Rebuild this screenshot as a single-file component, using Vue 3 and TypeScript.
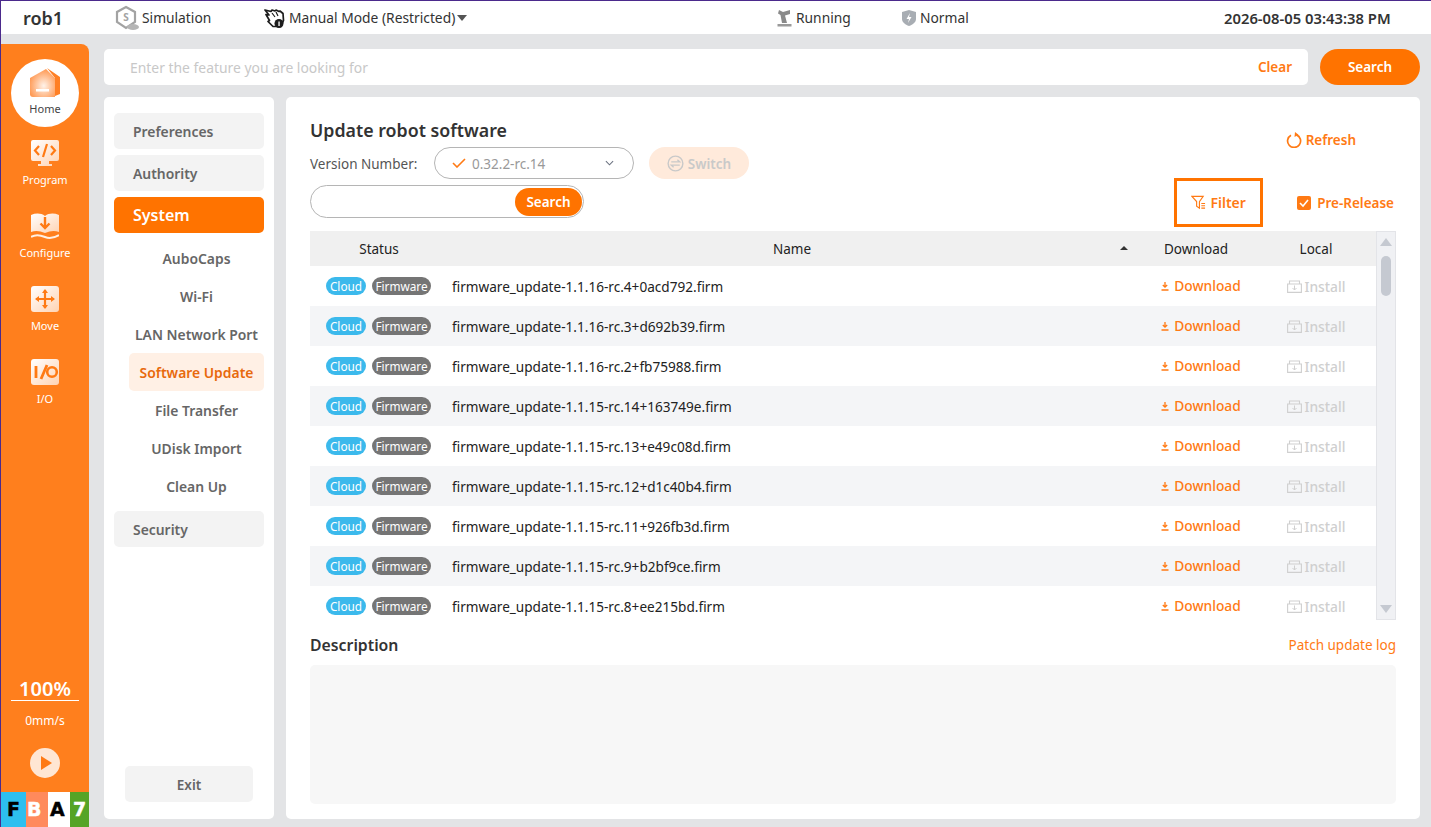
<script setup lang="ts">
interface NavItem {
  label: string
  kind: 'group' | 'active' | 'sub' | 'current'
}

const navItems: NavItem[] = [
  { label: 'Preferences', kind: 'group' },
  { label: 'Authority', kind: 'group' },
  { label: 'System', kind: 'active' },
  { label: 'AuboCaps', kind: 'sub' },
  { label: 'Wi-Fi', kind: 'sub' },
  { label: 'LAN Network Port', kind: 'sub' },
  { label: 'Software Update', kind: 'current' },
  { label: 'File Transfer', kind: 'sub' },
  { label: 'UDisk Import', kind: 'sub' },
  { label: 'Clean Up', kind: 'sub' },
  { label: 'Security', kind: 'group' }
]

const files = [
  'firmware_update-1.1.16-rc.4+0acd792.firm',
  'firmware_update-1.1.16-rc.3+d692b39.firm',
  'firmware_update-1.1.16-rc.2+fb75988.firm',
  'firmware_update-1.1.15-rc.14+163749e.firm',
  'firmware_update-1.1.15-rc.13+e49c08d.firm',
  'firmware_update-1.1.15-rc.12+d1c40b4.firm',
  'firmware_update-1.1.15-rc.11+926fb3d.firm',
  'firmware_update-1.1.15-rc.9+b2bf9ce.firm',
  'firmware_update-1.1.15-rc.8+ee215bd.firm'
]
</script>

<template>
  <div class="page">
    <header class="topbar">
      <div class="robot">rob1</div>
      <div class="top-item sim">
        <svg class="sim-icon" viewBox="0 0 26 26" width="26" height="26">
          <path d="M12 2l9 5v10l-9 6-9-6V7z" fill="none" stroke="#a3a3a3" stroke-width="2.2" />
          <text x="12" y="16" font-size="10" font-weight="700" text-anchor="middle" fill="#a3a3a3" font-family="Noto Sans">S</text>
          <ellipse cx="19" cy="22" rx="6" ry="3" fill="#b5b5b5" />
        </svg>
        <span>Simulation</span>
      </div>
      <div class="top-item mode">
        <svg viewBox="0 0 22 22" width="22" height="22">
          <path d="M1 3l6 1.500 1-1.500 3 1 1-1 3 1.500 1-.500 3 2.500.500 7-2.500 6H9l-5-5 1.500-1L2 7.500l3 .500z" fill="#fff" stroke="#1c1c1c" stroke-width="1.700" stroke-linejoin="round" />
          <path d="M8 6l3 4M12 5l2 4" stroke="#1c1c1c" stroke-width="1.200" />
          <circle cx="15" cy="16.500" r="4.500" fill="#1c1c1c" />
          <rect x="14.400" y="14.500" width="1.300" height="4.500" fill="#fff" />
        </svg>
        <span>Manual Mode (Restricted)</span>
        <i class="caret"></i>
      </div>
      <div class="top-item running">
        <svg viewBox="0 0 18 18" width="18" height="18">
          <path d="M3 1l4 2 7-2v4L9 6.500 11 14H6L4.500 6 2 4.500z" fill="#8a8a8a" />
          <rect x="1.500" y="15" width="14" height="2.500" fill="#9a9a9a" />
        </svg>
        <span>Running</span>
      </div>
      <div class="top-item normal">
        <svg viewBox="0 0 16 18" width="16" height="18">
          <path d="M8 1l7 2v7c0 3-3 5.500-7 7-4-1.500-7-4-7-7V3z" fill="#a8adb3" />
          <path d="M9 4L5.500 10H8l-1 4 3.500-6H8z" fill="#fff" />
        </svg>
        <span>Normal</span>
      </div>
      <div class="clock">2026-08-05 03:43:38 PM</div>
    </header>

    <div class="shell">
      <aside class="rail">
        <div class="rail-home">
          <svg viewBox="0 0 30 30" width="30" height="30">
            <defs>
              <radialGradient id="homeGrad" cx="0.55" cy="0.6" r="0.7">
                <stop offset="0" stop-color="#fff3ea" />
                <stop offset="1" stop-color="#ff8a3a" />
              </radialGradient>
              <linearGradient id="railGrad" x1="0" y1="0" x2="1" y2="1">
                <stop offset="0" stop-color="#ffffff" />
                <stop offset="1" stop-color="#ffd3b3" />
              </linearGradient>
            </defs>
            <path d="M17 0l13 9v17l-5 2V10z" fill="#ff7f24" />
            <path d="M0 10L16 1l9 9v19H3c-2 0-3-1-3-3z" fill="url(#homeGrad)" />
            <rect x="6" y="21" width="13" height="2.500" fill="#fff" />
          </svg>
          <span>Home</span>
        </div>
        <div class="rail-item">
          <svg viewBox="0 0 28 26" width="28" height="26">
            <path d="M2 0h24a2 2 0 0 1 2 2v17a2 2 0 0 1-2 2h-8v3h3v2H7v-2h3v-3H2a2 2 0 0 1-2-2V2a2 2 0 0 1 2-2z" fill="url(#railGrad)" />
            <path d="M8 6l-4 4.500L8 15M20 6l4 4.500-4 4.500M16 4l-4 13" fill="none" stroke="#ff7a14" stroke-width="2.200" />
          </svg>
          <span>Program</span>
        </div>
        <div class="rail-item">
          <svg viewBox="0 0 28 26" width="28" height="26">
            <path d="M0 2c5-2 10-2 14 1 4-3 9-3 14-1v17c-5-2-9-1-14 1-5-2-9-3-14-1z" fill="url(#railGrad)" />
            <path d="M14 4v11M9.500 10.500l4.500 4.500 4.500-4.500" fill="none" stroke="#ff7a14" stroke-width="2.400" />
            <path d="M0 24c5-3 9-2 14 0s9 1 14-2" fill="none" stroke="#fff0e4" stroke-width="2" />
          </svg>
          <span>Configure</span>
        </div>
        <div class="rail-item">
          <svg viewBox="0 0 28 26" width="28" height="26">
            <rect width="28" height="26" rx="3" fill="url(#railGrad)" />
            <path d="M14 4v18M5 13h18" stroke="#ff7a14" stroke-width="2.200" />
            <path d="M14 3l3 4h-6zM14 23l3-4h-6zM4 13l4-3v6zM24 13l-4-3v6z" fill="#ff7a14" />
          </svg>
          <span>Move</span>
        </div>
        <div class="rail-item">
          <svg viewBox="0 0 28 26" width="28" height="26">
            <rect width="28" height="26" rx="3" fill="url(#railGrad)" />
            <path d="M5 7v12M10 20l6-14" stroke="#ff7a14" stroke-width="2.800" />
            <circle cx="21" cy="13" r="4.800" fill="none" stroke="#ff7a14" stroke-width="2.600" />
          </svg>
          <span>I/O</span>
        </div>
        <div class="rail-speed">
          <div class="speed-pct">100%</div>
          <div class="speed-val">0mm/s</div>
          <svg class="play" viewBox="0 0 30 30" width="30" height="30">
            <circle cx="15" cy="15" r="15" fill="#ffe6d3" />
            <path d="M11 8l11 7-11 7z" fill="#ff7a14" />
          </svg>
        </div>
        <div class="fba">
          <span class="fba-f">F</span><span class="fba-b">B</span><span class="fba-a">A</span><span class="fba-7">7</span>
        </div>
      </aside>

      <div class="content">
        <div class="search-row">
          <div class="search-box">
            <span class="placeholder">Enter the feature you are looking for</span>
            <span class="clear">Clear</span>
          </div>
          <button class="search-btn">Search</button>
        </div>

        <div class="panels">
          <nav class="menu">
            <div class="menu-list">
              <div v-for="item in navItems" :key="item.label" class="menu-item" :class="item.kind">{{ item.label }}</div>
            </div>
            <button class="exit">Exit</button>
          </nav>

          <main class="main">
            <div class="head">
              <div class="head-left">
                <h2>Update robot software</h2>
                <div class="version-row">
                  <span class="version-label">Version Number:</span>
                  <div class="version-select">
                    <svg viewBox="0 0 14 10" width="14" height="10"><path d="M1 5l4 4 8-8" fill="none" stroke="#ff7a14" stroke-width="1.600" /></svg>
                    <span>0.32.2-rc.14</span>
                    <svg class="chev" viewBox="0 0 10 6" width="9" height="6"><path d="M1 1l4 4 4-4" fill="none" stroke="#6b7280" stroke-width="1.200" /></svg>
                  </div>
                  <button class="switch">
                    <svg viewBox="0 0 18 18" width="17" height="17">
                      <circle cx="9" cy="9" r="7.800" fill="none" stroke="#c9c9c9" stroke-width="1.500" />
                      <path d="M4.500 7.300h9l-2.500-2.300M13.500 10.700h-9l2.500 2.300" fill="none" stroke="#c9c9c9" stroke-width="1.400" />
                    </svg>
                    <span>Switch</span>
                  </button>
                </div>
                <div class="table-search">
                  <button>Search</button>
                </div>
              </div>
              <div class="head-right">
                <div class="refresh">
                  <svg viewBox="0 0 16 16" width="16" height="16">
                    <path d="M5 3.200a6.500 6.500 0 1 0 5.500-.3" fill="none" stroke="#ff7a14" stroke-width="1.700" />
                    <path d="M9 0l3.500 2.800L8.500 5z" fill="#ff7a14" />
                  </svg>
                  <span>Refresh</span>
                </div>
                <div class="filter-row">
                  <div class="filter">
                    <svg viewBox="0 0 16 16" width="15" height="15">
                      <path d="M1 1.500h12L9 7v7L6 12V7z" fill="none" stroke="#ff7a14" stroke-width="1.200" />
                      <path d="M11 9h4M11 11.500h4M11 14h4" stroke="#ff7a14" stroke-width="1.100" />
                    </svg>
                    <span>Filter</span>
                  </div>
                  <div class="prerelease">
                    <svg viewBox="0 0 14 14" width="14" height="14">
                      <rect width="14" height="14" rx="2" fill="#ff7a14" />
                      <path d="M3 7l3 3 5-6" fill="none" stroke="#fff" stroke-width="1.600" />
                    </svg>
                    <span>Pre-Release</span>
                  </div>
                </div>
              </div>
            </div>

            <div class="table">
              <div class="table-main">
                <div class="row header">
                  <div class="cell c-status">Status</div>
                  <div class="cell c-name">Name<i class="sort"></i></div>
                  <div class="cell c-dl">Download</div>
                  <div class="cell c-local">Local</div>
                </div>
                <div class="table-body">
                  <div v-for="file in files" :key="file" class="row">
                    <div class="cell c-status tags">
                      <span class="tag cloud">Cloud</span>
                      <span class="tag firmware">Firmware</span>
                    </div>
                    <div class="cell c-name file">{{ file }}</div>
                    <div class="cell c-dl link">
                      <svg viewBox="0 0 8 9" width="8" height="9"><path d="M4 0v4.500M1.800 3l2.200 2.200L6.200 3M.500 8h7" fill="none" stroke="#ff7a14" stroke-width="1.300" /></svg>
                      <span>Download</span>
                    </div>
                    <div class="cell c-local install">
                      <svg viewBox="0 0 15 13" width="15" height="13">
                        <path d="M.6 4h13.800v8.400H.6zM2.500 4V1h10v3" fill="none" stroke="#cfcfcf" stroke-width="1.100" />
                        <path d="M7.500 5.500v4.500M5.500 8l2 2 2-2" fill="none" stroke="#cfcfcf" stroke-width="1" />
                      </svg>
                      <span>Install</span>
                    </div>
                  </div>
                </div>
              </div>
              <div class="scroll">
                <i class="arrow up"></i>
                <div class="scroll-track"><div class="thumb"></div></div>
                <i class="arrow down"></i>
              </div>
            </div>

            <div class="desc-head">
              <h3>Description</h3>
              <span>Patch update log</span>
            </div>
            <div class="desc-box"></div>
          </main>
        </div>
      </div>
    </div>
  </div>
</template>

<style>
html, body {
  margin: 0;
  height: 100%;
  overflow: hidden;
}
</style>

<style scoped>
.page {
  width: 1431px;
  height: 827px;
  box-sizing: border-box;
  background: #e3e4e6;
  border-left: 1px solid #4b2a8c;
  border-top: 1px solid #4b2a8c;
  font-family: "Noto Sans", "Open Sans", sans-serif;
  color: #333;
  display: flex;
  flex-direction: column;
}

button {
  font-family: inherit;
  border: none;
}

/* top bar */
.topbar {
  height: 33px;
  flex-shrink: 0;
  background: #fff;
  display: flex;
  align-items: center;
  font-size: 13.800px;
  color: #333;
}

.robot {
  width: 113px;
  padding-left: 22px;
  box-sizing: border-box;
  font-size: 18px;
  font-weight: 600;
}

.top-item {
  display: flex;
  align-items: center;
  gap: 2px;
}

.sim {
  width: 150px;
}

.mode {
  width: 512px;
  gap: 3px;
}

.caret {
  width: 0;
  height: 0;
  border-left: 5px solid transparent;
  border-right: 5px solid transparent;
  border-top: 6px solid #555;
  margin-left: -1px;
}

.running {
  width: 125px;
}

.normal {
  width: 323px;
  gap: 3px;
}

.clock {
  font-weight: 600;
  font-size: 14.800px;
  white-space: nowrap;
}

/* left rail */
.shell {
  flex: 1;
  display: flex;
  min-height: 0;
  padding-top: 10px;
}

.rail {
  width: 88px;
  flex-shrink: 0;
  background: #ff7f1d;
  border-radius: 0 8px 0 0;
  display: flex;
  flex-direction: column;
  align-items: center;
  color: #fff;
  font-size: 11px;
}

.rail-home {
  width: 68px;
  height: 68px;
  margin-top: 15px;
  border-radius: 50%;
  background: #fff;
  color: #444;
  display: flex;
  flex-direction: column;
  align-items: center;
  padding-top: 9px;
  box-sizing: border-box;
  flex-shrink: 0;
}

.rail-home svg {
  margin-bottom: 3px;
}

.rail-item {
  height: 73px;
  display: flex;
  flex-direction: column;
  align-items: center;
  justify-content: flex-start;
  gap: 6px;
  flex-shrink: 0;
}

.rail-item:nth-child(2) {
  margin-top: 13px;
}

.rail-speed {
  margin-top: auto;
  width: 68px;
  display: flex;
  flex-direction: column;
  align-items: center;
}

.speed-pct {
  width: 100%;
  text-align: center;
  font-size: 20px;
  font-weight: 600;
  line-height: 23px;
  border-bottom: 1px solid #fff;
}

.speed-val {
  font-size: 12px;
  margin-top: 11px;
  line-height: 17px;
}

.play {
  margin-top: 19px;
}

.fba {
  margin-top: 14px;
  width: 100%;
  height: 35px;
  display: flex;
  font-size: 19px;
  font-weight: 800;
  line-height: 35px;
  font-family: "DejaVu Sans", sans-serif;
  -webkit-text-stroke: 0.4px currentColor;
}

.fba span {
  display: block;
  box-sizing: border-box;
}

.fba-f {
  width: 25px;
  padding-left: 6px;
  background: #2dbfef;
  color: #000;
}

.fba-b {
  width: 22px;
  padding-left: 1px;
  background: #ff8a5c;
  color: #fff;
}

.fba-a {
  width: 22px;
  padding-left: 2px;
  background: #fff;
  color: #000;
}

.fba-7 {
  width: 19px;
  padding-left: 3px;
  background: #55a426;
  color: #fff;
}

/* content */
.content {
  flex: 1;
  padding: 5px 11px 8px 15px;
  display: flex;
  flex-direction: column;
  gap: 12px;
  min-width: 0;
}

.search-row {
  display: flex;
  gap: 12px;
  height: 36px;
  flex-shrink: 0;
}

.search-box {
  flex: 1;
  background: #fff;
  border-radius: 5px;
  display: flex;
  align-items: center;
  justify-content: space-between;
  padding: 0 16px 0 26px;
  font-size: 13.500px;
}

.placeholder {
  color: #c8c8c8;
  font-size: 13.900px;
  padding-top: 1px;
}

.clear {
  color: #ff7a14;
  font-weight: 600;
}

.search-btn {
  width: 100px;
  background: #ff7300;
  color: #fff;
  border-radius: 18px;
  font-size: 13.500px;
  font-weight: 600;
}

.panels {
  flex: 1;
  display: flex;
  gap: 12px;
  min-height: 0;
}

/* settings menu */
.menu {
  width: 170px;
  flex-shrink: 0;
  background: #fff;
  border-radius: 5px;
  box-sizing: border-box;
  padding: 16px 10px 17px;
  display: flex;
  flex-direction: column;
  align-items: center;
}

.menu-list {
  width: 100%;
  flex: 1;
  display: flex;
  flex-direction: column;
}

.menu-item {
  font-size: 13.900px;
  font-weight: 600;
  color: #666;
}

.menu-item.group {
  height: 36px;
  line-height: 38px;
  background: #f3f3f3;
  border-radius: 5px;
  padding-left: 19px;
  margin-bottom: 6px;
}

.menu-item.active {
  height: 36px;
  line-height: 37px;
  background: #ff7300;
  color: #fff;
  border-radius: 5px;
  padding-left: 19px;
  font-size: 16px;
  margin-bottom: 6px;
}

.menu-item.sub,
.menu-item.current {
  height: 38px;
  line-height: 40px;
  text-align: center;
  margin-left: 15px;
}

.menu-item.current {
  background: #fff0e5;
  color: #e8690c;
  border-radius: 5px;
}

.menu-item.sub + .group {
  margin-top: 6px;
}

.exit {
  width: 128px;
  height: 36px;
  padding-top: 3px;
  background: #f3f3f3;
  color: #666;
  border-radius: 5px;
  font-size: 13.500px;
  font-weight: 600;
}

/* main panel */
.main {
  flex: 1;
  min-width: 0;
  background: #fff;
  border-radius: 5px;
  box-sizing: border-box;
  padding: 20px 24px 15px;
  display: flex;
  flex-direction: column;
}

.head {
  height: 114px;
  display: flex;
  justify-content: space-between;
  flex-shrink: 0;
}

.head h2 {
  margin: 0;
  font-size: 17.800px;
  font-weight: 600;
  line-height: 27px;
  color: #333;
}

.version-row {
  display: flex;
  align-items: center;
  height: 32px;
  margin-top: 3px;
  font-size: 13.500px;
}

.version-label {
  width: 124px;
  padding-top: 2px;
  color: #555;
}

.version-select {
  width: 200px;
  height: 32px;
  box-sizing: border-box;
  border: 1px solid #b5b5b5;
  border-radius: 16px;
  display: flex;
  align-items: center;
  padding: 0 19px 0 17px;
  gap: 6px;
  color: #999;
}

.version-select span {
  padding-top: 2px;
}

.chev {
  margin-left: auto;
}

.switch {
  margin-left: 15px;
  width: 100px;
  height: 32px;
  border-radius: 16px;
  background: #ffeadb;
  color: #c9c9c9;
  display: flex;
  align-items: center;
  justify-content: center;
  gap: 4px;
  font-size: 13.500px;
  font-weight: 600;
}

.switch span {
  padding-top: 2px;
}

.table-search {
  margin-top: 6px;
  width: 274px;
  height: 33px;
  box-sizing: border-box;
  border: 1px solid #b5b5b5;
  border-radius: 17px;
  display: flex;
  justify-content: flex-end;
  align-items: center;
  padding-right: 1px;
}

.table-search button {
  width: 67px;
  height: 28px;
  border-radius: 14px;
  background: #ff7300;
  color: #fff;
  font-size: 13.500px;
  font-weight: 600;
}

.head-right {
  display: flex;
  flex-direction: column;
  align-items: flex-end;
  font-size: 13.500px;
  font-weight: 600;
  color: #ff7a14;
}

.refresh {
  display: flex;
  align-items: center;
  gap: 4px;
  margin-top: 13px;
  margin-right: 40px;
  height: 20px;
}

.filter-row {
  display: flex;
  align-items: center;
  margin-top: 27px;
  margin-right: 2px;
}

.filter {
  width: 89px;
  height: 49px;
  box-sizing: border-box;
  border: 3px solid #ff7300;
  margin-top: 1px;
  display: flex;
  align-items: center;
  justify-content: center;
  gap: 4px;
  font-size: 14px;
}

.prerelease {
  display: flex;
  align-items: center;
  gap: 6px;
  margin-left: 34px;
  margin-top: 1px;
}

/* table */
.table {
  height: 389px;
  display: flex;
  flex-shrink: 0;
  font-size: 13.500px;
}

.table-main {
  flex: 1;
  min-width: 0;
  display: flex;
  flex-direction: column;
}

.table-body {
  flex: 1;
  overflow: hidden;
}

.row {
  height: 40px;
  display: flex;
  align-items: center;
}

.row.header {
  height: 35px;
  background: #f0f0f0;
  flex-shrink: 0;
  color: #222;
}

.table-body .row:nth-child(even) {
  background: #f4f5f7;
}

.cell {
  display: flex;
  align-items: center;
  justify-content: center;
  height: 100%;
}

.c-status {
  width: 138px;
}

.c-name {
  width: 688px;
  position: relative;
}

.c-dl,
.c-local {
  width: 120px;
}

.sort {
  position: absolute;
  right: 8px;
  top: 15px;
  width: 0;
  height: 0;
  border-left: 4px solid transparent;
  border-right: 4px solid transparent;
  border-bottom: 4px solid #333;
}

.tags {
  justify-content: flex-start;
  padding-left: 16px;
  box-sizing: border-box;
  gap: 6px;
}

.tag {
  height: 18px;
  line-height: 18px;
  border-radius: 9px;
  font-size: 11.800px;
  color: #fff;
}

.cloud {
  width: 40px;
  text-align: center;
  background: #3bb9ec;
}

.firmware {
  width: 59px;
  text-align: center;
  background: #757575;
}

.file {
  justify-content: flex-start;
  padding-left: 4px;
  box-sizing: border-box;
  font-size: 13.600px;
  color: #222;
}

.link {
  gap: 5px;
  padding-left: 10px;
  box-sizing: border-box;
  color: #ff7a14;
  font-weight: 500;
  font-size: 13.800px;
}

.link span {
  margin-top: -1px;
}

.install {
  gap: 3px;
  color: #cfcfcf;
  font-weight: 500;
  font-size: 13.800px;
}

.scroll {
  width: 20px;
  flex-shrink: 0;
  box-sizing: border-box;
  background: #f0f1f4;
  border: 1px solid #e3e4e8;
  display: flex;
  flex-direction: column;
  align-items: center;
  padding: 6px 0;
}

.scroll-track {
  flex: 1;
  width: 10px;
  margin-top: 10px;
}

.thumb {
  height: 40px;
  background: #c5c9d1;
  border-radius: 5px;
}

.arrow {
  width: 0;
  height: 0;
  border-left: 6px solid transparent;
  border-right: 6px solid transparent;
}

.arrow.up {
  border-bottom: 8px solid #c5c9d1;
}

.arrow.down {
  border-top: 8px solid #c5c9d1;
}

/* description */
.desc-head {
  height: 45px;
  box-sizing: border-box;
  padding-top: 4px;
  flex-shrink: 0;
  display: flex;
  align-items: center;
  justify-content: space-between;
  font-size: 13.500px;
  color: #ff7a14;
}

.desc-head h3 {
  margin: 0;
  font-size: 15.800px;
  font-weight: 600;
  color: #333;
}

.desc-box {
  flex: 1;
  background: #f7f7f7;
  border-radius: 5px;
}
</style>
